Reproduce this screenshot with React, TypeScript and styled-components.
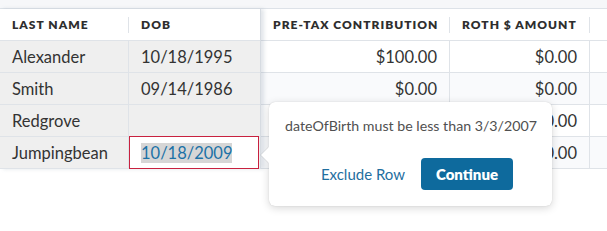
import * as React from "react";
import styled, { createGlobalStyle } from "styled-components";

const GlobalStyle = createGlobalStyle`
  html, body {
    margin: 0;
    padding: 0;
    background: #ffffff;
    font-family: Lato, "Open Sans", Arial, sans-serif;
    color: #333333;
  }
`;

const Page = styled.div`
  position: relative;
  width: 607px;
  height: 231px;
  overflow: hidden;
  background: #ffffff;
`;

const TopStrip = styled.div`
  height: 8px;
  background: #f6f7f9;
  border-bottom: 1px solid #dde2e8;
`;

const Grid = styled.div`
  display: flex;
  align-items: flex-start;
`;

const Pinned = styled.div`
  position: relative;
  flex: none;
  display: flex;
  flex-direction: column;
  width: 260px;
  border-right: 1px solid #d6dbe1;
  box-shadow: 3px 0 4px rgba(120, 135, 155, 0.22);
  z-index: 1;
`;

const Scroll = styled.div`
  flex: none;
  display: flex;
  flex-direction: column;
`;

const Row = styled.div<{ $bg: string }>`
  display: flex;
  height: 31px;
  border-bottom: 1px solid #dfe3e8;
  background: ${(p) => p.$bg};
`;

const HeadRow = styled(Row)`
  height: 31px;
  border-bottom: 1px solid #dfe3e8;
`;

const HeadCell = styled.div<{ $w: number; $right?: boolean; $sep?: boolean }>`
  position: relative;
  box-sizing: border-box;
  width: ${(p) => p.$w}px;
  padding: 0 12px;
  display: flex;
  align-items: center;
  justify-content: ${(p) => (p.$right ? "flex-end" : "flex-start")};
  font-size: 12px;
  font-weight: 800;
  letter-spacing: 0.085em;
  color: #2e2e2e;
  white-space: nowrap;

  &::after {
    content: "";
    display: ${(p) => (p.$sep ? "block" : "none")};
    position: absolute;
    right: 0;
    top: 8px;
    bottom: 7px;
    width: 1px;
    background: #dfe3e8;
  }
`;

const Cell = styled.div<{ $w: number; $right?: boolean; $sep?: boolean }>`
  box-sizing: border-box;
  width: ${(p) => p.$w}px;
  padding: 0 12px;
  display: flex;
  align-items: center;
  justify-content: ${(p) => (p.$right ? "flex-end" : "flex-start")};
  font-size: 16.5px;
  color: #333333;
  white-space: nowrap;
  border-right: ${(p) => (p.$sep ? "1px solid #dfe3e8" : "none")};
`;

const EditCell = styled.div<{ $w: number }>`
  box-sizing: border-box;
  width: ${(p) => p.$w}px;
  height: 33px;
  margin-top: -1px;
  padding: 0 11px;
  display: flex;
  align-items: center;
  background: #ffffff;
  border: 1px solid #c8213f;
  font-size: 16.5px;
  position: relative;
  z-index: 2;
`;

const Selected = styled.span`
  background: #d6d6d6;
  color: #1c72a6;
`;

const Popover = styled.div`
  position: absolute;
  left: 269px;
  top: 102px;
  width: 283px;
  height: 104px;
  box-sizing: border-box;
  padding: 14px 16px 16px 16px;
  background: #ffffff;
  border-radius: 6px;
  box-shadow: 0 2px 8px rgba(0, 0, 0, 0.16), 0 0 1px rgba(0, 0, 0, 0.2);
  z-index: 5;
  display: flex;
  flex-direction: column;

  &::before {
    content: "";
    position: absolute;
    left: -8px;
    top: 45px;
    width: 0;
    height: 0;
    border-top: 8px solid transparent;
    border-bottom: 8px solid transparent;
    border-right: 8px solid #ffffff;
    filter: drop-shadow(-1px 0 0 rgba(0, 0, 0, 0.08));
  }
`;

const Message = styled.div`
  font-size: 14.2px;
  line-height: 20px;
  color: #505050;
  white-space: nowrap;
`;

const Actions = styled.div`
  margin-top: auto;
  display: flex;
  align-items: center;
  justify-content: flex-end;
  gap: 16px;
  padding-right: 23px;
`;

const LinkButton = styled.button`
  border: none;
  background: none;
  padding: 0;
  font-family: inherit;
  font-size: 15px;
  color: #1f6f9f;
  cursor: pointer;
`;

const PrimaryButton = styled.button`
  border: none;
  height: 32px;
  width: 92px;
  border-radius: 4px;
  background: #0e6a9d;
  color: #ffffff;
  font-family: inherit;
  font-size: 15px;
  font-weight: 800;
  cursor: pointer;
`;

type Person = { last: string; dob: string; pretax: string; roth: string };

const people: Person[] = [
  { last: "Alexander", dob: "10/18/1995", pretax: "$100.00", roth: "$0.00" },
  { last: "Smith", dob: "09/14/1986", pretax: "$0.00", roth: "$0.00" },
  { last: "Redgrove", dob: "", pretax: "$0.00", roth: "$0.00" },
  { last: "Jumpingbean", dob: "10/18/2009", pretax: "$0.00", roth: "$0.00" },
];

const PINNED_BG = "#efefef";

export default function App(): JSX.Element {
  return (
    <Page>
      <GlobalStyle />
      <TopStrip />
      <Grid>
        <Pinned>
          <HeadRow $bg="#ffffff">
            <HeadCell $w={129} $sep>LAST NAME</HeadCell>
            <HeadCell $w={130}>DOB</HeadCell>
          </HeadRow>
          {people.map((p, i) => (
            <Row key={p.last} $bg={PINNED_BG}>
              <Cell $w={129} $sep>{p.last}</Cell>
              {i === 3 ? (
                <EditCell $w={130}>
                  <Selected>{p.dob}</Selected>
                </EditCell>
              ) : (
                <Cell $w={130}>{p.dob}</Cell>
              )}
            </Row>
          ))}
        </Pinned>
        <Scroll>
          <HeadRow $bg="#ffffff">
            <HeadCell $w={189} $sep>PRE-TAX CONTRIBUTION</HeadCell>
            <HeadCell $w={140} $sep>ROTH $ AMOUNT</HeadCell>
            <HeadCell $w={120}></HeadCell>
          </HeadRow>
          {people.map((p, i) => (
            <Row key={p.last} $bg={i % 2 === 1 ? "#f9fafc" : "#ffffff"}>
              <Cell $w={189} $right $sep>{p.pretax}</Cell>
              <Cell $w={140} $right $sep>{p.roth}</Cell>
              <Cell $w={120}></Cell>
            </Row>
          ))}
        </Scroll>
      </Grid>
      <Popover>
        <Message>dateOfBirth must be less than 3/3/2007</Message>
        <Actions>
          <LinkButton>Exclude Row</LinkButton>
          <PrimaryButton>Continue</PrimaryButton>
        </Actions>
      </Popover>
    </Page>
  );
}
